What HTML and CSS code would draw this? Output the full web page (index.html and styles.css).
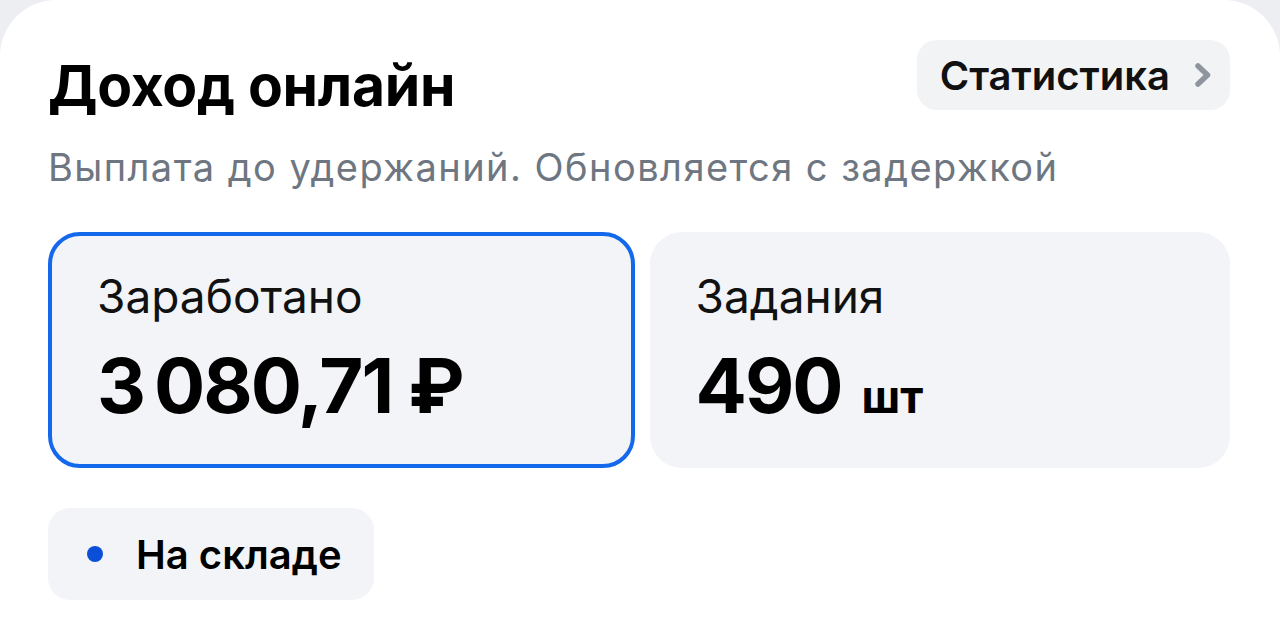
FILE: index.html
```html
<!DOCTYPE html>
<html lang="ru">
<head>
  <meta charset="UTF-8">
  <meta name="viewport" content="width=device-width, initial-scale=1.0">
  <title>Доход онлайн</title>
  <link rel="stylesheet" href="styles.css">
</head>
<body>
  <div class="panel">
    <div class="panel-head">
      <h2>Доход онлайн</h2>
      <button class="stats-btn">Статистика
        <svg class="chevron" viewBox="0 0 18 26" width="18" height="26">
          <path d="M4 4 L13.5 13 L4 22" fill="none" stroke="#8f959d" stroke-width="5.5" stroke-linecap="round" stroke-linejoin="round"/>
        </svg>
      </button>
    </div>
    <p class="hint">Выплата до удержаний. Обновляется с задержкой</p>
    <div class="tiles">
      <div class="tile active">
        <div class="tile-label">Заработано</div>
        <div class="tile-value">3&#8201;080,71 ₽</div>
      </div>
      <div class="tile">
        <div class="tile-label">Задания</div>
        <div class="tile-value">490 <span class="unit">шт</span></div>
      </div>
    </div>
    <div class="chip"><span class="dot"></span>На складе</div>
  </div>
</body>
</html>
```

FILE: styles.css
```css
body {
  margin: 0;
  background: #eceef1;
  font-family: Inter, "Noto Sans", sans-serif;
  color: #000;
}
.panel {
  height: 621px;
  box-sizing: border-box;
  padding: 40px 50px 0 48px;
  background: #fff;
  border-radius: 56px 56px 0 0;
}
.panel-head {
  display: flex;
  justify-content: space-between;
  align-items: flex-start;
}
h2 {
  margin: 14px 0 0;
  font-size: 57px;
  font-weight: 700;
  line-height: 64px;
  letter-spacing: -0.3px;
}
.stats-btn {
  display: flex;
  align-items: center;
  gap: 24px;
  height: 70px;
  padding: 0 18px 0 23px;
  border: none;
  border-radius: 20px;
  background: #f2f3f5;
  font-family: inherit;
  font-size: 40px;
  font-weight: 600;
  color: #111;
}
.hint {
  margin: 27px 0 0;
  font-size: 38px;
  line-height: 44px;
  letter-spacing: 1.45px;
  color: #6e7681;
}
.tiles {
  display: flex;
  gap: 15px;
  margin-top: 43px;
}
.tile {
  flex: 1;
  height: 236px;
  box-sizing: border-box;
  padding: 37px 46px 0;
  background: #f2f4f7;
  border-radius: 32px;
}
.tile.active {
  border: 4px solid #1468ec;
  padding: 33px 45px 0;
}
.tile-label {
  font-size: 46px;
  line-height: 54px;
  color: #111;
}
.tile-value {
  margin-top: 20px;
  font-size: 76px;
  font-weight: 700;
  line-height: 84px;
  letter-spacing: -2px;
}
.unit {
  margin-left: 4px;
  font-size: 45px;
  letter-spacing: 0;
}
.chip {
  display: inline-flex;
  align-items: center;
  gap: 33px;
  height: 92px;
  margin-top: 40px;
  padding: 0 32px 0 39px;
  background: #f2f4f7;
  border-radius: 22px;
  font-size: 40px;
  font-weight: 600;
}
.dot {
  width: 16px;
  height: 16px;
  border-radius: 50%;
  background: #0b4fd8;
}
```
